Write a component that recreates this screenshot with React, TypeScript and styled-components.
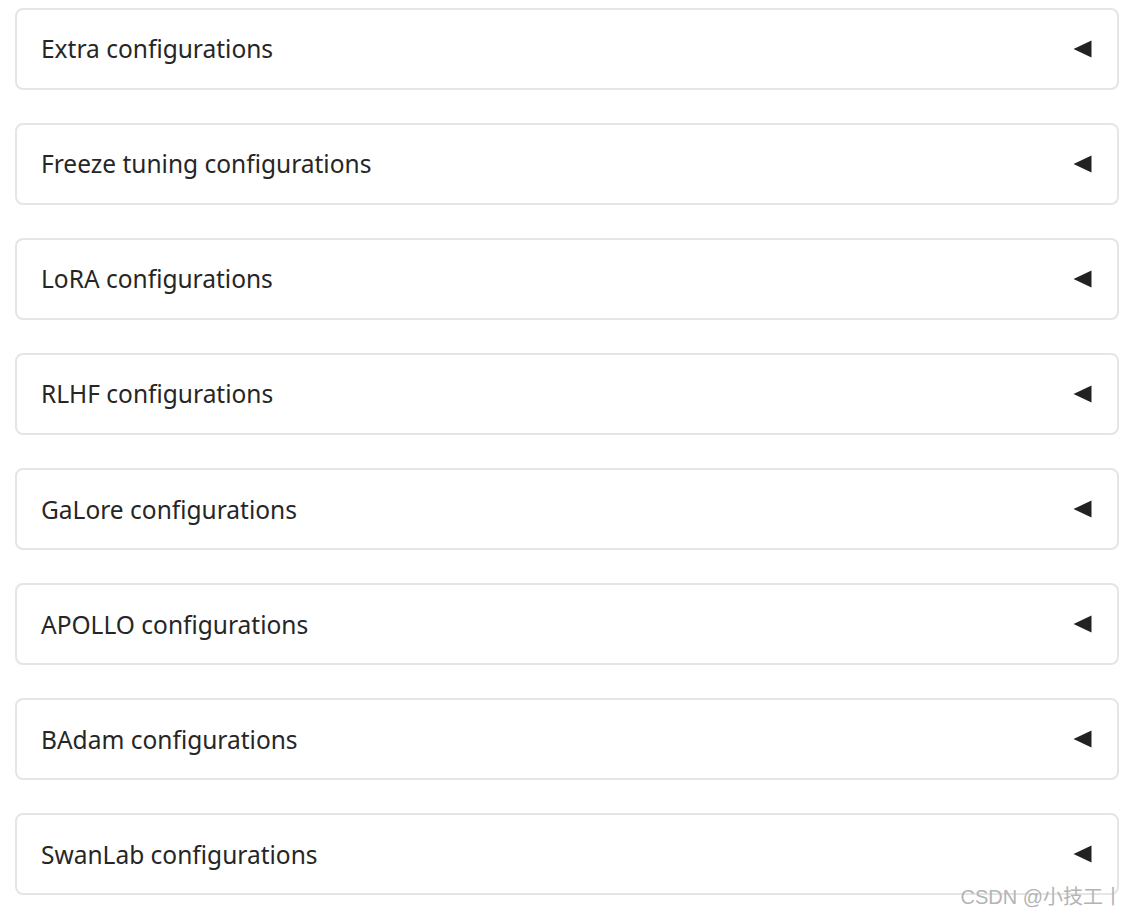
import styled, {createGlobalStyle} from "styled-components";

const GlobalStyle = createGlobalStyle`
    html, body {
        margin: 0;
        padding: 0;
        background: #ffffff;
    }
    body {
        font-family: "Noto Sans", "Open Sans", sans-serif;
    }
`

const Page = styled.div`
    position: relative;
    width: 1134px;
    height: 918px;
    box-sizing: border-box;
    padding: 7.5px 15px 0 15px;
    display: flex;
    flex-direction: column;
    gap: 33.15px;
`

const Panel = styled.div`
    box-sizing: border-box;
    height: 82px;
    flex-shrink: 0;
    border: 2px solid #e5e5e5;
    border-radius: 8px;
    display: flex;
    align-items: center;
    justify-content: space-between;
    padding: 0 25px 0 24px;
`

const PanelTitle = styled.span`
    font-size: 24.5px;
    color: #262626;
`

const Caret = styled.svg`
    width: 19px;
    height: 18px;
    display: block;
`

const Watermark = styled.div`
    position: absolute;
    right: 11px;
    bottom: 8px;
    font-family: "Liberation Sans", "Noto Sans CJK SC", sans-serif;
    font-size: 20px;
    color: #b4b4b4;
    white-space: nowrap;
`

const sections = [
    'Extra configurations',
    'Freeze tuning configurations',
    'LoRA configurations',
    'RLHF configurations',
    'GaLore configurations',
    'APOLLO configurations',
    'BAdam configurations',
    'SwanLab configurations',
]

export default function App() {
    return <>
        <GlobalStyle/>
        <Page>
            {sections.map(label => (
                <Panel key={label}>
                    <PanelTitle>{label}</PanelTitle>
                    <Caret viewBox="0 0 19 18">
                        <path d="M18.5 0.5 L0.5 9 L18.5 17.5 Z" fill="#222"/>
                    </Caret>
                </Panel>
            ))}
            <Watermark>CSDN @小技工丨</Watermark>
        </Page>
    </>
}
